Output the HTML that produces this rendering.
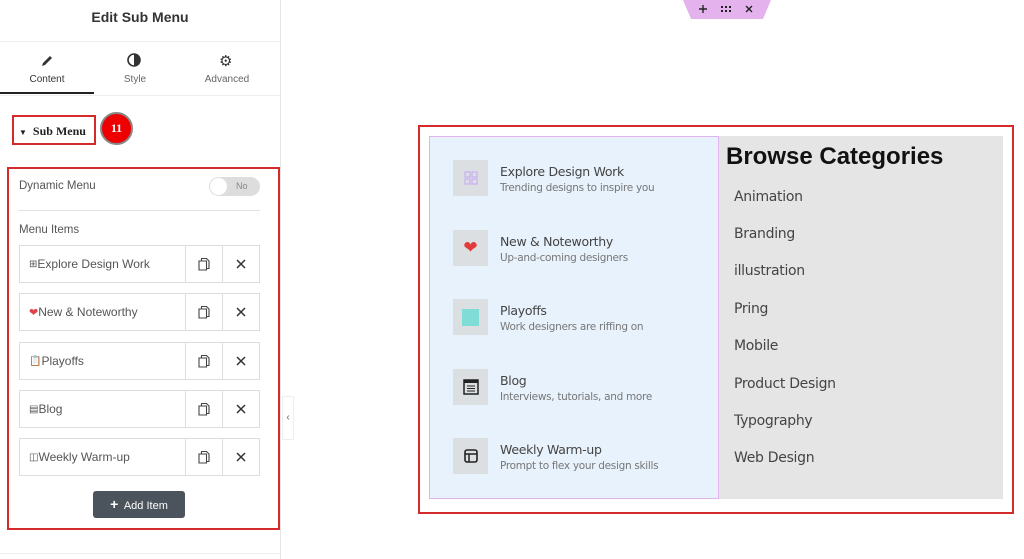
<!DOCTYPE html>
<html><head><meta charset="utf-8"><style>
*{box-sizing:border-box;margin:0;padding:0}
body{width:1024px;height:559px;position:relative;background:#fff;font-family:"Liberation Sans",sans-serif;overflow:hidden}
.a{position:absolute}
.row{position:absolute;left:19px;width:241px;height:38px;border:1px solid #ddd;background:#fff}
.row .t{position:absolute;left:9px;top:11px;font-size:12px;color:#555;display:flex;align-items:center}
.row .d1{position:absolute;left:165px;top:0;width:1px;height:36px;background:#ddd}
.row .d2{position:absolute;left:202px;top:0;width:1px;height:36px;background:#ddd}
.row .c{position:absolute;left:178px;top:11px}
.row .x{position:absolute;left:216px;top:13px}
.ib{position:absolute;left:453px;width:35px;height:36px;background:#dcdfe2;display:flex;align-items:center;justify-content:center}
.tt{position:absolute;left:500px;font-size:12.5px;color:#444;font-family:"DejaVu Sans",sans-serif;letter-spacing:-0.3px}
.st{position:absolute;left:500px;font-size:10.5px;color:#777;font-family:"DejaVu Sans",sans-serif;letter-spacing:-0.3px}
.cat{position:absolute;left:734px;font-size:14px;color:#444;font-family:"DejaVu Sans",sans-serif;letter-spacing:-0.3px}
</style></head><body>
<svg width="0" height="0" style="position:absolute"><defs>
<symbol id="cp" viewBox="0 0 12 14"><path d="M3.5 3.5V1.5h5l2.5 2.5v7.5H8.5" fill="none" stroke="#444" stroke-width="1.1"/><path d="M1 4h7.5v9H1z" fill="none" stroke="#444" stroke-width="1.1"/></symbol>
<symbol id="xx" viewBox="0 0 10 10"><path d="M1 1L9 9M9 1L1 9" stroke="#333" stroke-width="1.5"/></symbol>
</defs></svg>
<div class="a" style="left:0;top:0;width:281px;height:559px;border-right:1px solid #e6e6e6"></div>
<div class="a" style="left:0;top:9px;width:280px;text-align:center;font-size:14px;font-weight:bold;color:#333">Edit Sub Menu</div>
<div class="a" style="left:0;top:41px;width:280px;height:1px;background:#eee"></div>
<svg class="a" style="left:40px;top:54px" width="14" height="14" viewBox="0 0 14 14"><path d="M2 12 L3 9 L10 2 L12 4 L5 11 Z" fill="#333"/></svg>
<div class="a" style="left:0;top:74px;width:94px;text-align:center;font-size:10px;color:#333">Content</div>
<div class="a" style="left:0;top:92px;width:94px;height:2px;background:#222"></div>
<svg class="a" style="left:127px;top:53px" width="14" height="14"><circle cx="7" cy="7" r="6" fill="none" stroke="#333" stroke-width="1.6"/><path d="M7 1 A6 6 0 0 1 7 13Z" fill="#333"/></svg>
<div class="a" style="left:94px;top:74px;width:82px;text-align:center;font-size:10px;color:#666">Style</div>
<div class="a" style="left:219px;top:52px;font-size:15px;color:#333">⚙</div>
<div class="a" style="left:186px;top:74px;width:82px;text-align:center;font-size:10px;color:#666">Advanced</div>
<div class="a" style="left:0;top:95px;width:280px;height:1px;background:#eee"></div>
<div class="a" style="left:12px;top:115px;width:84px;height:30px;border:2px solid #d42a2a"></div>
<div class="a" style="left:19px;top:124px;font-size:12px;font-weight:bold;color:#222;font-family:'Liberation Serif',serif"><span style="font-size:8px">▼</span>&nbsp; Sub Menu</div>
<div class="a" style="left:100px;top:112px;width:33px;height:33px;border-radius:50%;background:#e00;border:2px solid #888;color:#fff;font-size:12px;font-weight:bold;text-align:center;line-height:29px;font-family:'Liberation Serif',serif">11</div>
<div class="a" style="left:7px;top:167px;width:273px;height:363px;border:2px solid #d42a2a"></div>
<div class="a" style="left:19px;top:180px;font-size:11.5px;color:#555">Dynamic Menu</div>
<div class="a" style="left:209px;top:177px;width:51px;height:19px;border-radius:10px;background:#ddd"></div>
<div class="a" style="left:210px;top:178px;width:17px;height:17px;border-radius:50%;background:#fff"></div>
<div class="a" style="left:236px;top:181px;font-size:9px;color:#888">No</div>
<div class="a" style="left:18px;top:210px;width:242px;height:1px;background:#e3e3e3"></div>
<div class="a" style="left:19px;top:224px;font-size:11.5px;color:#555">Menu Items</div>

<div class="row" style="top:245px"><div class="t"><span style="font-size:10px">⊞</span>Explore Design Work</div><div class="d1"></div><div class="d2"></div><svg class="c" width="12" height="14"><use href="#cp"/></svg><svg class="x" width="10" height="10"><use href="#xx"/></svg></div>
<div class="row" style="top:293px"><div class="t"><span style="color:#d44;font-size:11px">❤</span>New &amp; Noteworthy</div><div class="d1"></div><div class="d2"></div><svg class="c" width="12" height="14"><use href="#cp"/></svg><svg class="x" width="10" height="10"><use href="#xx"/></svg></div>
<div class="row" style="top:342px"><div class="t"><span style="font-size:10px">📋</span>Playoffs</div><div class="d1"></div><div class="d2"></div><svg class="c" width="12" height="14"><use href="#cp"/></svg><svg class="x" width="10" height="10"><use href="#xx"/></svg></div>
<div class="row" style="top:390px"><div class="t"><span style="font-size:10px">▤</span>Blog</div><div class="d1"></div><div class="d2"></div><svg class="c" width="12" height="14"><use href="#cp"/></svg><svg class="x" width="10" height="10"><use href="#xx"/></svg></div>
<div class="row" style="top:438px"><div class="t"><span style="font-size:10px">◫</span>Weekly Warm-up</div><div class="d1"></div><div class="d2"></div><svg class="c" width="12" height="14"><use href="#cp"/></svg><svg class="x" width="10" height="10"><use href="#xx"/></svg></div>

<div class="a" style="left:93px;top:491px;width:92px;height:27px;background:#4b535c;border-radius:3px;color:#fff;font-size:11px;text-align:center;line-height:27px"><b style="font-size:14px">+</b>&nbsp; Add Item</div>
<div class="a" style="left:0;top:553px;width:280px;height:1px;background:#eee"></div>
<div class="a" style="left:282px;top:396px;width:12px;height:44px;background:#fff;border:1px solid #eee;font-size:10px;color:#666;text-align:center;line-height:42px">‹</div>

<svg class="a" style="left:683px;top:0" width="88" height="20"><polygon points="0,0 88,0 80,19 8,19" fill="#e4b3ee"/>
<path d="M16 9h8M20 5v8" stroke="#222" stroke-width="1.4"/>
<g fill="#222"><rect x="38" y="6" width="2" height="2"/><rect x="42" y="6" width="2" height="2"/><rect x="46" y="6" width="2" height="2"/><rect x="38" y="10" width="2" height="2"/><rect x="42" y="10" width="2" height="2"/><rect x="46" y="10" width="2" height="2"/></g>
<path d="M63 6l6 6M69 6l-6 6" stroke="#222" stroke-width="1.4"/></svg>

<div class="a" style="left:418px;top:125px;width:596px;height:389px;border:2px solid #d42a2a"></div>
<div class="a" style="left:429px;top:136px;width:290px;height:363px;background:#e8f2fc;border:1px solid #e0b4ee"></div>
<div class="a" style="left:719px;top:136px;width:284px;height:363px;background:#e5e5e5"></div>

<div class="ib" style="top:160px"><svg width="14" height="14"><g fill="none" stroke="#c9b3ef" stroke-width="1.3"><rect x="1" y="1" width="5" height="5"/><rect x="8" y="1" width="5" height="5"/><rect x="1" y="8" width="5" height="5"/><rect x="8" y="8" width="5" height="5"/></g></svg></div>
<div class="tt" style="top:164px">Explore Design Work</div><div class="st" style="top:182px">Trending designs to inspire you</div>
<div class="ib" style="top:230px"><span style="color:#e23a3a;font-size:17px">❤</span></div>
<div class="tt" style="top:234px">New &amp; Noteworthy</div><div class="st" style="top:252px">Up-and-coming designers</div>
<div class="ib" style="top:299px"><div style="width:17px;height:17px;background:#7fdcd6"></div></div>
<div class="tt" style="top:303px">Playoffs</div><div class="st" style="top:321px">Work designers are riffing on</div>
<div class="ib" style="top:369px"><svg width="16" height="16"><rect x="1" y="1" width="14" height="14" fill="none" stroke="#222" stroke-width="1.5"/><rect x="1" y="1" width="14" height="3" fill="#222"/><path d="M4 7h8M4 9.5h8M4 12h8" stroke="#222"/></svg></div>
<div class="tt" style="top:373px">Blog</div><div class="st" style="top:391px">Interviews, tutorials, and more</div>
<div class="ib" style="top:438px"><svg width="14" height="14"><rect x="1" y="1" width="12" height="12" rx="2" fill="none" stroke="#222" stroke-width="1.6"/><path d="M1 5h12M5 5v8" stroke="#222" stroke-width="1.5"/></svg></div>
<div class="tt" style="top:442px">Weekly Warm-up</div><div class="st" style="top:460px">Prompt to flex your design skills</div>

<div class="a" style="left:726px;top:143px;font-size:24px;font-weight:bold;color:#111;letter-spacing:0px">Browse Categories</div>
<div class="cat" style="top:189px">Animation</div>
<div class="cat" style="top:226px">Branding</div>
<div class="cat" style="top:263px">illustration</div>
<div class="cat" style="top:301px">Pring</div>
<div class="cat" style="top:338px">Mobile</div>
<div class="cat" style="top:376px">Product Design</div>
<div class="cat" style="top:413px">Typography</div>
<div class="cat" style="top:450px">Web Design</div>
</body></html>
